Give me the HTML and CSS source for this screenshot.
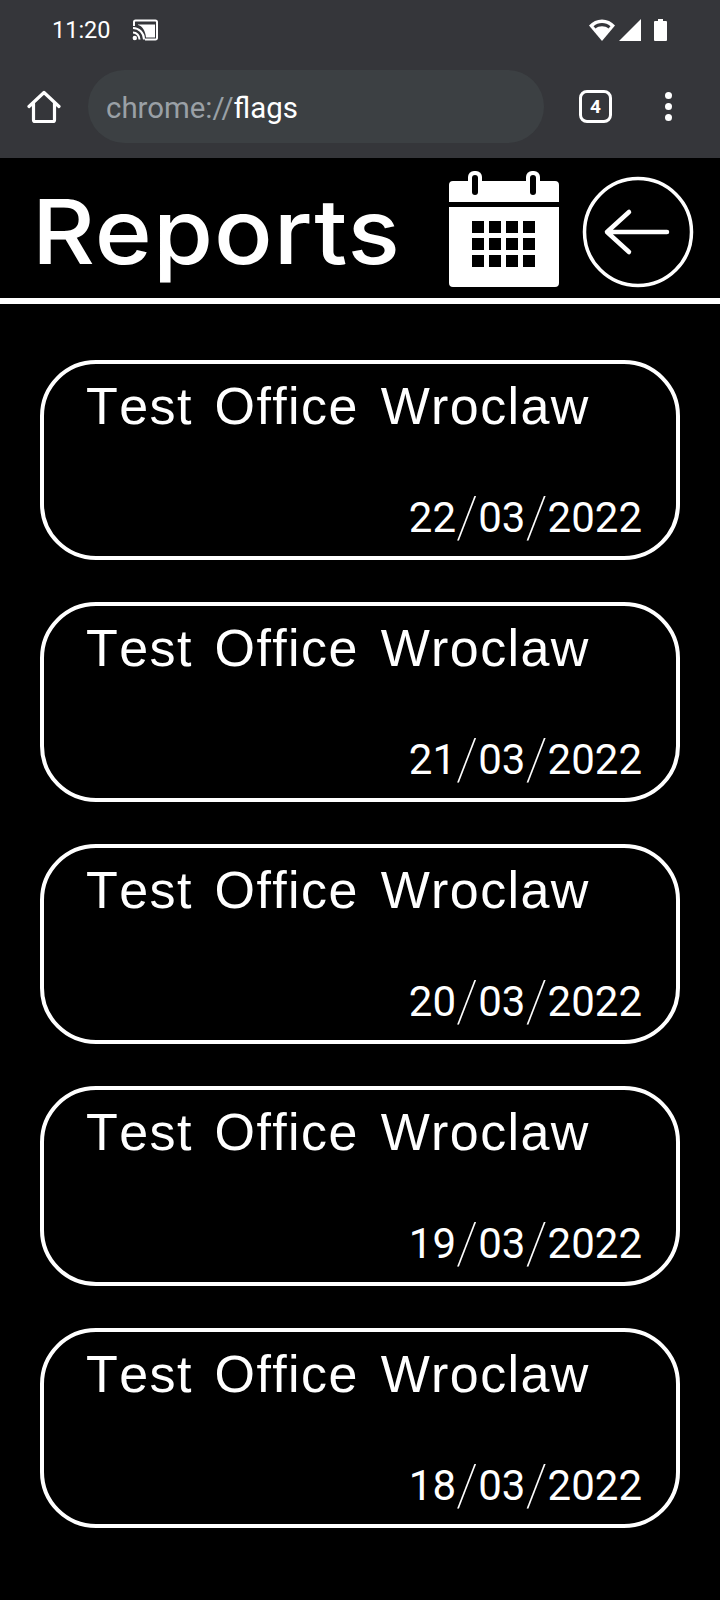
FILE: index.html
```html
<html>
	<head>
		<title>Reports</title>
		<link rel="stylesheet" href="styles.css">
	</head>
	<body>
		<div class="chrome">
			<div class="status">
				<span class="time">11:20</span>
				<svg class="cast" width="26" height="22" viewBox="0 0 26 22">
					<path d="M2 7V3a1.5 1.5 0 0 1 1.5-1.5h20A1.5 1.5 0 0 1 25 3v16a1.5 1.5 0 0 1-1.5 1.5H13" fill="none" stroke="#fff" stroke-width="2"/>
					<path d="M6 5.500h17v13H14C13.500 12 10 6.500 6 6z" fill="#fff"/>
					<path d="M1 9c6 0 11 5 11 11.500M1 13.500c3.500 0 6.500 3 6.500 7" fill="none" stroke="#fff" stroke-width="2"/>
					<circle cx="2.800" cy="19" r="2.200" fill="#fff"/>
				</svg>
				<span class="spacer"></span>
				<svg class="status-icons" width="82" height="24" viewBox="0 0 82 24">
					<path d="M1 7.500C4.500 3.500 9 1.500 14 1.500s9.500 2 13 6L14 23z" fill="#fff"/>
					<path d="M5.500 8.200C8 6 10.800 5 14 5s6 1 8.500 3.200l-2 2.300C18.700 9 16.500 8.200 14 8.200s-4.700.8-6.500 2.300z" fill="#35363a"/>
					<path d="M31 23 53 1v22z" fill="#fff"/>
					<path d="M66 4q0-1 1-1h3V1h5v2h3q1 0 1 1v18q0 1-1 1H67q-1 0-1-1z" fill="#fff"/>
				</svg>
			</div>
			<div class="toolbar">
				<svg class="home" width="34" height="34" viewBox="0 0 34 34">
					<path d="M2 16.500 17 2.500l15 14M6.500 13.500V30q0 1.500 1.500 1.500h18q1.500 0 1.500-1.500V13.500" fill="none" stroke="#fff" stroke-width="3.200" stroke-linecap="round" stroke-linejoin="round"/>
				</svg>
				<div class="omnibox"><span class="scheme">chrome://</span>flags</div>
				<div class="tabs">4</div>
				<div class="menu"><i></i><i></i><i></i></div>
			</div>
		</div>

		<div class="header">
			<h1>Reports</h1>
			<svg class="calendar" width="112" height="116" viewBox="0 0 112 116">
				<path d="M1 14q0-4 4-4h102q4 0 4 4v17H1zM1 36h110v76q0 4-4 4H5q-4 0-4-4z" fill="#fff"/>
				<rect x="20" y="0" width="14" height="20" rx="6" fill="#fff"/>
				<rect x="78" y="0" width="14" height="20" rx="6" fill="#fff"/>
				<rect x="24" y="4" width="6" height="20" rx="3" fill="#000"/>
				<rect x="82" y="4" width="6" height="20" rx="3" fill="#000"/>
				<path d="M24 50h12v12H24zM41 50h12v12H41zM58 50h12v12H58zM75 50h12v12H75zM24 67h12v12H24zM41 67h12v12H41zM58 67h12v12H58zM75 67h12v12H75zM24 84h12v12H24zM41 84h12v12H41zM58 84h12v12H58zM75 84h12v12H75z" fill="#000"/>
			</svg>
			<svg class="back" width="112" height="112" viewBox="0 0 112 112">
				<circle cx="56" cy="56" r="53.500" fill="none" stroke="#fff" stroke-width="3.500"/>
				<path d="M25 56h60M47 36 25 56l22 20" fill="none" stroke="#fff" stroke-width="4.500" stroke-linecap="round" stroke-linejoin="round"/>
			</svg>
		</div>

		<div class="reports">
			<div class="report">
				<div class="name">Test Office Wroclaw</div>
				<div class="date">22<span class="slash">/</span>03<span class="slash">/</span>2022</div>
			</div>
			<div class="report">
				<div class="name">Test Office Wroclaw</div>
				<div class="date">21<span class="slash">/</span>03<span class="slash">/</span>2022</div>
			</div>
			<div class="report">
				<div class="name">Test Office Wroclaw</div>
				<div class="date">20<span class="slash">/</span>03<span class="slash">/</span>2022</div>
			</div>
			<div class="report">
				<div class="name">Test Office Wroclaw</div>
				<div class="date">19<span class="slash">/</span>03<span class="slash">/</span>2022</div>
			</div>
			<div class="report">
				<div class="name">Test Office Wroclaw</div>
				<div class="date">18<span class="slash">/</span>03<span class="slash">/</span>2022</div>
			</div>
		</div>
	</body>
</html>
```
FILE: styles.css
```css
html, body {
	margin: 0;
	background: #000;
	color: #fff;
	font-family: "Liberation Sans", sans-serif;
}
svg {
	display: block;
	flex: none;
}

.chrome {
	background: #35363a;
	height: 158px;
	font-family: Roboto, sans-serif;
}
.status {
	display: flex;
	align-items: center;
	height: 60px;
	padding: 0 50px 0 52px;
}
.time {
	font-size: 23.500px;
	margin-right: 21px;
}
.spacer {
	flex: 1;
}
.toolbar {
	display: flex;
	align-items: center;
	height: 73px;
	margin-top: 10px;
	padding-left: 27px;
}
.omnibox {
	background: #3c4043;
	border-radius: 37px;
	width: 438px;
	height: 73px;
	line-height: 76px;
	margin-left: 27px;
	padding-left: 18px;
	font-size: 29.400px;
	flex: none;
}
.scheme {
	color: #9aa0a6;
}
.tabs {
	box-sizing: border-box;
	width: 33px;
	height: 33px;
	border: 3px solid #fff;
	border-radius: 8px;
	margin-left: 35px;
	font-size: 19px;
	font-weight: 700;
	line-height: 27px;
	text-align: center;
}
.menu {
	display: flex;
	flex-direction: column;
	gap: 4px;
	margin-left: 53px;
}
.menu i {
	width: 7px;
	height: 7px;
	border-radius: 50%;
	background: #fff;
}

.header {
	display: flex;
	align-items: center;
	height: 140px;
	border-bottom: 6px solid #fff;
	padding-left: 32px;
}
h1 {
	margin: 0 0 -7px;
	width: 416px;
	font-family: Inter, sans-serif;
	font-size: 90px;
	font-weight: 500;
	letter-spacing: 1px;
	transform: scaleX(1.08);
	transform-origin: left;
}
.calendar {
	margin-top: 2px;
}
.back {
	margin: 7px 0 0 22px;
}

.reports {
	display: flex;
	flex-direction: column;
	gap: 42px;
	padding: 56px 40px 0;
}
.report {
	box-sizing: border-box;
	height: 200px;
	border: 4px solid #fff;
	border-radius: 56px;
	padding: 0 34px 0 42px;
}
.name {
	font-size: 52px;
	line-height: 60px;
	letter-spacing: 1.400px;
	word-spacing: 6px;
	font-kerning: none;
	margin-top: 12px;
}
.date {
	font-family: Roboto, sans-serif;
	font-size: 42px;
	line-height: 50px;
	text-align: right;
	margin-top: 57px;
}
.slash {
	font-size: 58px;
	line-height: 0;
	font-weight: 100;
	vertical-align: -5px;
}
```
